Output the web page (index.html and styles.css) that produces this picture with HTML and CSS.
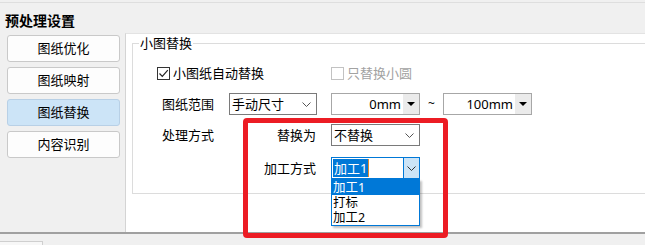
FILE: index.html
```html
<!DOCTYPE html>
<html lang="zh-CN">
<head>
    <meta charset="UTF-8">
    <meta name="viewport" content="width=device-width, initial-scale=1.0">
    <title>预处理设置</title>
    <link rel="stylesheet" href="styles.css">
</head>
<body>
    <div class="top">
        <h1>预处理设置</h1>
    </div>

    <div class="main">
        <div class="side">
            <button class="nav">图纸优化</button>
            <button class="nav">图纸映射</button>
            <button class="nav active">图纸替换</button>
            <button class="nav">内容识别</button>
        </div>

        <div class="panel">
            <fieldset class="group">
                <legend>小图替换</legend>
                <div class="form">
                    <label class="check first">
                        <span class="box on">
                            <svg width="11" height="11" viewBox="0 0 11 11"><path d="M1.5 5.5 L4.3 8.3 L9.8 2.2" fill="none" stroke="#222" stroke-width="1.2"/></svg>
                        </span>
                        小图纸自动替换
                    </label>
                    <label class="check second disabled">
                        <span class="box"></span>
                        只替换小圆
                    </label>

                    <span class="label c1">图纸范围</span>
                    <div class="combo c2">
                        <span class="val">手动尺寸</span>
                        <svg class="chev" width="9" height="5" viewBox="0 0 9 5"><path d="M0.5 0.5 L4.5 4.5 L8.5 0.5" fill="none" stroke="#555" stroke-width="1"/></svg>
                    </div>
                    <div class="spin c4">
                        <span class="num">0mm</span>
                        <span class="drop"><svg width="8" height="4" viewBox="0 0 8 4"><path d="M0 0 H8 L4 4 Z" fill="#000"/></svg></span>
                    </div>
                    <span class="tilde">~</span>
                    <div class="spin c6">
                        <span class="num">100mm</span>
                        <span class="drop"><svg width="8" height="4" viewBox="0 0 8 4"><path d="M0 0 H8 L4 4 Z" fill="#000"/></svg></span>
                    </div>

                    <span class="label c1">处理方式</span>
                    <span class="label right c2">替换为</span>
                    <div class="combo c4">
                        <span class="val">不替换</span>
                        <svg class="chev" width="9" height="5" viewBox="0 0 9 5"><path d="M0.5 0.5 L4.5 4.5 L8.5 0.5" fill="none" stroke="#555" stroke-width="1"/></svg>
                    </div>

                    <span class="label right c2 r4">加工方式</span>
                    <div class="combo focus c4 r4">
                        <span class="val sel">加工1</span>
                        <span class="btn">
                            <svg width="9" height="5" viewBox="0 0 9 5"><path d="M0.5 0.5 L4.5 4.5 L8.5 0.5" fill="none" stroke="#333" stroke-width="1"/></svg>
                        </span>
                        <ul class="list">
                            <li class="hot">加工1</li>
                            <li>打标</li>
                            <li>加工2</li>
                        </ul>
                    </div>
                </div>
            </fieldset>
        </div>
    </div>

    <div class="bottom">
        <div class="tab"></div>
    </div>

    <!-- annotation frame drawn over the form -->
    <div class="mark"></div>
</body>
</html>
```

FILE: styles.css
```css
body {
    margin: 0;
    width: 645px;
    height: 245px;
    overflow: hidden;
    position: relative;
    background: #f0f0f0;
    color: #000;
    font-family: "Noto Sans", "Noto Sans CJK SC", sans-serif;
    font-size: 13px;
}

.top {
    height: 31px;
    margin-top: 2px;
    border-top: 1px solid #dedede;
    box-sizing: border-box;
}

h1 {
    margin: 0;
    padding: 9px 0 0 5px;
    font-size: 14px;
    line-height: 18px;
    font-weight: bold;
}

.main {
    display: flex;
    height: 199px;
}

.side {
    width: 125px;
    padding: 2px 0 0 7px;
    box-sizing: border-box;
    display: flex;
    flex-direction: column;
    gap: 5px;
}

.nav {
    width: 113px;
    height: 27px;
    border: 1px solid #c9c9c9;
    border-radius: 3px;
    background: #fdfdfd;
    font: inherit;
    color: #000;
    padding: 0;
    line-height: 25px;
}

.nav.active {
    background: #cce4f7;
    border-color: #b8d0e6;
}

.panel {
    flex: 1;
    background: #fff;
    border-left: 1px solid #d4d4d4;
    border-top: 1px solid #e3e3e3;
    min-width: 0;
}

.group {
    margin: 2px -20px 0 6px;
    padding: 0 0 0 6px;
    border: 1px solid #dcdcdc;
    min-width: 0;
}

.group legend {
    padding: 0 1px;
    line-height: 15px;
}

.form {
    display: grid;
    grid-template-columns: 67px 88px 14px 89px 23px 89px;
    grid-template-rows: 22px 22px 22px auto;
    row-gap: 9px;
    padding: 11px 0 14px 23px;
}

.label {
    line-height: 22px;
    white-space: nowrap;
}

.right {
    text-align: right;
    padding-right: 1px;
}

.c1 { grid-column: 1; }
.c2 { grid-column: 2; }
.c4 { grid-column: 4; }
.c6 { grid-column: 6; }

.r4 {
    margin-top: 2px;
}

.check {
    display: flex;
    align-items: center;
    gap: 3px;
    line-height: 22px;
    white-space: nowrap;
}

.check.first {
    grid-column: 1 / span 3;
    margin-left: -5px;
}

.check.second {
    grid-column: 4 / span 3;
}

.box {
    width: 13px;
    height: 13px;
    box-sizing: border-box;
    border: 1px solid #333;
    background: #fff;
    display: flex;
    align-items: center;
    justify-content: center;
}

.disabled {
    color: #a2a2a2;
}

.disabled .box {
    border-color: #c2c2c2;
}

.combo {
    position: relative;
    height: 22px;
    box-sizing: border-box;
    border: 1px solid #7a7a7a;
    background: #fff;
    display: flex;
    align-items: center;
    padding-left: 2px;
}

.combo .val {
    flex: 1;
    line-height: 18px;
    white-space: nowrap;
}

.combo .chev {
    margin-right: 5px;
}

.combo.focus {
    border-color: #0078d7;
    padding-left: 1px;
}

.combo .sel {
    flex: none;
    background: #0078d7;
    color: #fff;
    padding: 0 1px;
    margin-right: auto;
    border-right: 1px solid #e08a2a;
}

.combo .btn {
    width: 16px;
    height: 20px;
    box-sizing: border-box;
    background: #cce4f7;
    border-left: 1px solid #0078d7;
    display: flex;
    align-items: center;
    justify-content: center;
}

.list {
    position: absolute;
    top: 21px;
    left: -1px;
    width: 89px;
    margin: 0;
    padding: 0;
    list-style: none;
    background: #fff;
    border: 1px solid #0078d7;
    box-sizing: border-box;
    box-shadow: 2px 2px 2px rgba(0, 0, 0, 0.25);
}

.list li {
    height: 15px;
    line-height: 15px;
    font-size: 12.5px;
    padding-left: 1px;
    overflow: hidden;
}

.list li.hot {
    background: #0078d7;
    color: #fff;
}

.spin {
    height: 22px;
    box-sizing: border-box;
    border: 1px solid #a7a7a7;
    background: #fff;
    display: flex;
    align-items: stretch;
}

.spin .num {
    flex: 1;
    text-align: right;
    line-height: 20px;
    padding-right: 2px;
}

.spin .drop {
    width: 16px;
    background: #ebebeb;
    display: flex;
    align-items: center;
    justify-content: center;
}

.tilde {
    grid-column: 5;
    text-align: center;
    line-height: 22px;
    font-size: 12px;
}

.bottom {
    height: 11px;
    border-top: 2px solid #a0a0a0;
    box-sizing: content-box;
}

.tab {
    width: 42px;
    height: 4px;
    margin-top: 7px;
    border-top: 1px solid #cfcfcf;
    border-right: 1px solid #cfcfcf;
    background: #f7f7f7;
}

.mark {
    position: absolute;
    left: 243px;
    top: 118px;
    width: 205px;
    height: 120px;
    box-sizing: border-box;
    border: 5px solid #ec1c24;
    border-radius: 4px;
}
```
